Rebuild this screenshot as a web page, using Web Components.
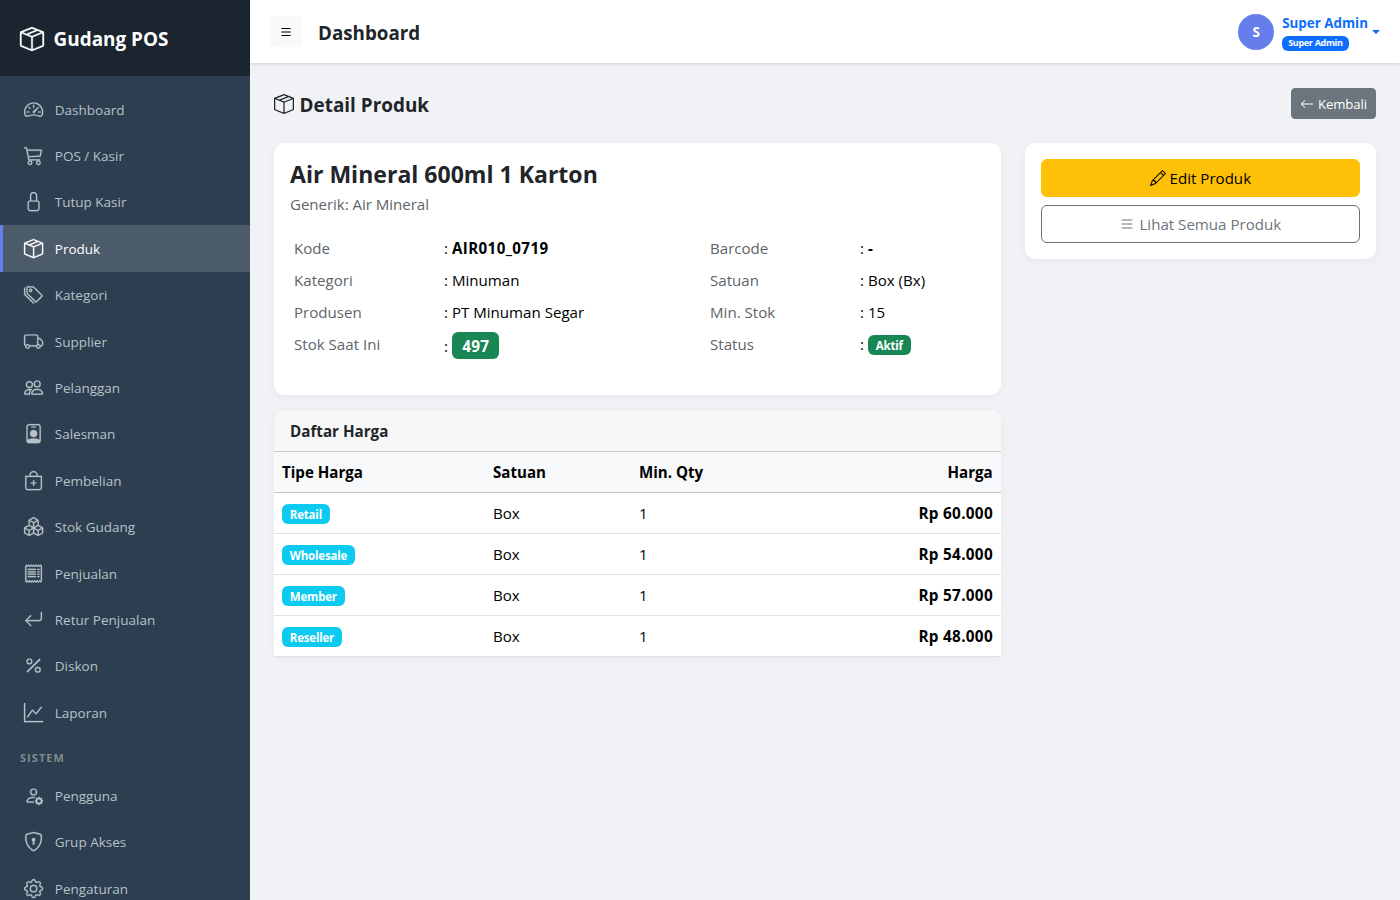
<!DOCTYPE html>
<html lang="id">
<head>
<meta charset="utf-8">
<title>Detail Produk - Gudang POS</title>
<style>
  :root {
    --primary: #0d6efd;
    --accent: #667eea;
    --gray: #6c757d;
    --success: #198754;
    --info: #0dcaf0;
    --warning: #ffc107;
    --dark: #212529;
    --line: #dee2e6;
  }
  body {
    margin: 0;
    height: 900px;
    overflow: hidden;
    background: #f0f2f5;
    color: var(--dark);
    font: 15.1px/24px "Segoe UI", "Open Sans", "Noto Sans", sans-serif;
  }
</style>
</head>
<body>
<pos-app></pos-app>

<script>
const icons = {
  box: 'M8.186 1.113a.5.5 0 0 0-.372 0L1.846 3.5l2.404.961L10.404 2zm3.564 1.426L5.596 5 8 5.961 14.154 3.5zm3.25 1.7-6.5 2.6v7.922l6.5-2.6V4.24zM7.5 14.762V6.838L1 4.239v7.923zM7.443.184a1.5 1.5 0 0 1 1.114 0l7.129 2.852A.5.5 0 0 1 16 3.5v8.662a1 1 0 0 1-.629.928l-7.185 2.874a.5.5 0 0 1-.372 0L.63 13.09a1 1 0 0 1-.63-.928V3.5a.5.5 0 0 1 .314-.464z',
  speedometer: 'M8 4a.5.5 0 0 1 .5.5V6a.5.5 0 0 1-1 0V4.5A.5.5 0 0 1 8 4M3.732 5.732a.5.5 0 0 1 .707 0l.915.914a.5.5 0 1 1-.708.708l-.914-.915a.5.5 0 0 1 0-.707M2 10a.5.5 0 0 1 .5-.5h1.586a.5.5 0 0 1 0 1H2.5A.5.5 0 0 1 2 10m9.5 0a.5.5 0 0 1 .5-.5h1.5a.5.5 0 0 1 0 1H12a.5.5 0 0 1-.5-.5m.754-4.246a.39.39 0 0 0-.527-.02L7.547 9.31a.91.91 0 1 0 1.302 1.258l3.434-4.297a.39.39 0 0 0-.029-.518zM0 10a8 8 0 1 1 15.547 2.661c-.442 1.253-1.845 1.602-2.932 1.25C11.309 13.488 9.475 13 8 13c-1.474 0-3.31.488-4.615.911-1.087.352-2.49.003-2.932-1.25A8 8 0 0 1 0 10m8-7a7 7 0 0 0-6.603 9.329c.203.575.923.876 1.68.63C4.397 12.533 6.358 12 8 12s3.604.532 4.923.96c.757.245 1.477-.056 1.68-.631A7 7 0 0 0 8 3',
  cart: 'M0 1.5A.5.5 0 0 1 .5 1H2a.5.5 0 0 1 .485.379L2.89 3H14.5a.5.5 0 0 1 .49.598l-1 5a.5.5 0 0 1-.465.401l-9.397.472L4.415 11H13a.5.5 0 0 1 0 1H4a.5.5 0 0 1-.491-.408L2.01 3.607 1.61 2H.5a.5.5 0 0 1-.5-.5M3.102 4l.84 4.479 9.144-.459L13.89 4zM5 12a2 2 0 1 0 0 4 2 2 0 0 0 0-4m7 0a2 2 0 1 0 0 4 2 2 0 0 0 0-4m-7 1a1 1 0 1 1 0 2 1 1 0 0 1 0-2m7 0a1 1 0 1 1 0 2 1 1 0 0 1 0-2',
  lock: 'M8 1a2 2 0 0 1 2 2v4H6V3a2 2 0 0 1 2-2m3 6V3a3 3 0 0 0-6 0v4a2 2 0 0 0-2 2v5a2 2 0 0 0 2 2h6a2 2 0 0 0 2-2V9a2 2 0 0 0-2-2M5 8h6a1 1 0 0 1 1 1v5a1 1 0 0 1-1 1H5a1 1 0 0 1-1-1V9a1 1 0 0 1 1-1',
  tags: 'M3 2v4.586l7 7L14.586 9l-7-7zM2 2a1 1 0 0 1 1-1h4.586a1 1 0 0 1 .707.293l7 7a1 1 0 0 1 0 1.414l-4.586 4.586a1 1 0 0 1-1.414 0l-7-7A1 1 0 0 1 2 6.586zM5.5 5a.5.5 0 1 1 0-1 .5.5 0 0 1 0 1m0 1a1.5 1.5 0 1 0 0-3 1.5 1.5 0 0 0 0 3M1 7.086a1 1 0 0 0 .293.707L8.75 15.25l-.043.043a1 1 0 0 1-1.414 0l-7-7A1 1 0 0 1 0 7.586V3a1 1 0 0 1 1-1z',
  truck: 'M0 3.5A1.5 1.5 0 0 1 1.5 2h9A1.5 1.5 0 0 1 12 3.5V5h1.02a1.5 1.5 0 0 1 1.17.563l1.481 1.85a1.5 1.5 0 0 1 .329.938V10.5a1.5 1.5 0 0 1-1.5 1.5H14a2 2 0 1 1-4 0H5a2 2 0 1 1-3.998-.085A1.5 1.5 0 0 1 0 10.5zm1.294 7.456A2 2 0 0 1 4.732 11h5.536a2 2 0 0 1 .732-.732V3.5a.5.5 0 0 0-.5-.5h-9a.5.5 0 0 0-.5.5v7a.5.5 0 0 0 .294.456M12 10a2 2 0 0 1 1.732 1h.768a.5.5 0 0 0 .5-.5V8.35a.5.5 0 0 0-.11-.312l-1.48-1.85A.5.5 0 0 0 13.02 6H12zm-9 1a1 1 0 1 0 0 2 1 1 0 0 0 0-2m9 0a1 1 0 1 0 0 2 1 1 0 0 0 0-2',
  people: 'M15 14s1 0 1-1-1-4-5-4-5 3-5 4 1 1 1 1zm-7.978-1L7 12.996c.001-.264.167-1.03.76-1.72C8.312 10.629 9.282 10 11 10c1.717 0 2.687.63 3.24 1.276.593.69.758 1.457.76 1.72l-.008.002-.014.002zM11 7a2 2 0 1 0 0-4 2 2 0 0 0 0 4m3-2a3 3 0 1 1-6 0 3 3 0 0 1 6 0M6.936 9.28a6 6 0 0 0-1.23-.247A7 7 0 0 0 5 9c-4 0-5 3-5 4q0 1 1 1h4.216A2.24 2.24 0 0 1 5 13c0-1.01.377-2.042 1.09-2.904.243-.294.526-.569.846-.816M4.92 10A5.5 5.5 0 0 0 4 13H1c0-.26.164-1.03.76-1.724.545-.636 1.492-1.256 3.16-1.275ZM1.5 5.5a3 3 0 1 1 6 0 3 3 0 0 1-6 0m3-2a2 2 0 1 0 0 4 2 2 0 0 0 0-4',
  badge: 'M6.5 2a.5.5 0 0 0 0 1h3a.5.5 0 0 0 0-1zM11 8a3 3 0 1 1-6 0 3 3 0 0 1 6 0M4.5 0A2.5 2.5 0 0 0 2 2.5V14a2 2 0 0 0 2 2h8a2 2 0 0 0 2-2V2.5A2.5 2.5 0 0 0 11.5 0zM3 2.5A1.5 1.5 0 0 1 4.5 1h7A1.5 1.5 0 0 1 13 2.5v10.795a4.2 4.2 0 0 0-.776-.492C11.392 12.387 10.063 12 8 12s-3.392.387-4.224.803a4.2 4.2 0 0 0-.776.492z',
  bag: 'M8 7.5a.5.5 0 0 1 .5.5v1.5H10a.5.5 0 0 1 0 1H8.5V12a.5.5 0 0 1-1 0v-1.5H6a.5.5 0 0 1 0-1h1.5V8a.5.5 0 0 1 .5-.5M8 1a2.5 2.5 0 0 1 2.5 2.5V4h-5v-.5A2.5 2.5 0 0 1 8 1m3.5 3v-.5a3.5 3.5 0 1 0-7 0V4H1v10a2 2 0 0 0 2 2h10a2 2 0 0 0 2-2V4zM2 5h12v9a1 1 0 0 1-1 1H3a1 1 0 0 1-1-1z',
  boxes: 'M7.752.066a.5.5 0 0 1 .496 0l3.75 2.143a.5.5 0 0 1 .252.434v3.995l3.498 2A.5.5 0 0 1 16 9.07v4.286a.5.5 0 0 1-.252.434l-3.75 2.143a.5.5 0 0 1-.496 0l-3.502-2-3.502 2.001a.5.5 0 0 1-.496 0l-3.75-2.143A.5.5 0 0 1 0 13.357V9.071a.5.5 0 0 1 .252-.434L3.75 6.638V2.643a.5.5 0 0 1 .252-.434zM4.25 7.504 1.508 9.071l2.742 1.567 2.742-1.567zM7.5 9.933l-2.75 1.571v3.134l2.75-1.571zm1 3.134 2.75 1.571v-3.134L8.5 9.933zm.508-3.996 2.742 1.567 2.742-1.567-2.742-1.567zm2.242-2.433V3.504L8.5 5.076V8.21zM7.5 8.21V5.076L4.75 3.504v3.134zM5.258 2.643 8 4.21l2.742-1.567L8 1.076zM15 9.933l-2.75 1.571v3.134L15 13.067zM3.75 14.638v-3.134L1 9.933v3.134z',
  receipt: 'M1.92.506a.5.5 0 0 1 .434.14L3 1.293l.646-.647a.5.5 0 0 1 .708 0L5 1.293l.646-.647a.5.5 0 0 1 .708 0L7 1.293l.646-.647a.5.5 0 0 1 .708 0L9 1.293l.646-.647a.5.5 0 0 1 .708 0l.646.647.646-.647a.5.5 0 0 1 .708 0l.646.647.646-.647a.5.5 0 0 1 .801.13l.5 1A.5.5 0 0 1 15 2v12a.5.5 0 0 1-.053.224l-.5 1a.5.5 0 0 1-.8.13L13 14.707l-.646.647a.5.5 0 0 1-.708 0L11 14.707l-.646.647a.5.5 0 0 1-.708 0L9 14.707l-.646.647a.5.5 0 0 1-.708 0L7 14.707l-.646.647a.5.5 0 0 1-.708 0L5 14.707l-.646.647a.5.5 0 0 1-.708 0L3 14.707l-.646.647a.5.5 0 0 1-.801-.13l-.5-1A.5.5 0 0 1 1 14V2a.5.5 0 0 1 .053-.224l.5-1a.5.5 0 0 1 .367-.27m.217 1.338L2 2.118v11.764l.137.274.51-.51a.5.5 0 0 1 .707 0l.646.647.646-.646a.5.5 0 0 1 .708 0l.646.646.646-.646a.5.5 0 0 1 .708 0l.646.646.646-.646a.5.5 0 0 1 .708 0l.646.646.646-.646a.5.5 0 0 1 .708 0l.646.646.646-.646a.5.5 0 0 1 .708 0l.509.509.137-.274V2.118l-.137-.274-.51.51a.5.5 0 0 1-.707 0L12 1.707l-.646.647a.5.5 0 0 1-.708 0L10 1.707l-.646.647a.5.5 0 0 1-.708 0L8 1.707l-.646.647a.5.5 0 0 1-.708 0L6 1.707l-.646.647a.5.5 0 0 1-.708 0L4 1.707l-.646.647a.5.5 0 0 1-.708 0zM3 4.5a.5.5 0 0 1 .5-.5h6a.5.5 0 1 1 0 1h-6a.5.5 0 0 1-.5-.5m0 2a.5.5 0 0 1 .5-.5h6a.5.5 0 1 1 0 1h-6a.5.5 0 0 1-.5-.5m0 2a.5.5 0 0 1 .5-.5h6a.5.5 0 1 1 0 1h-6a.5.5 0 0 1-.5-.5m0 2a.5.5 0 0 1 .5-.5h6a.5.5 0 0 1 0 1h-6a.5.5 0 0 1-.5-.5m8-6a.5.5 0 0 1 .5-.5h1a.5.5 0 0 1 0 1h-1a.5.5 0 0 1-.5-.5m0 2a.5.5 0 0 1 .5-.5h1a.5.5 0 0 1 0 1h-1a.5.5 0 0 1-.5-.5m0 2a.5.5 0 0 1 .5-.5h1a.5.5 0 0 1 0 1h-1a.5.5 0 0 1-.5-.5m0 2a.5.5 0 0 1 .5-.5h1a.5.5 0 0 1 0 1h-1a.5.5 0 0 1-.5-.5',
  return: 'M14.5 1.5a.5.5 0 0 1 .5.5v4.8a2.5 2.5 0 0 1-2.5 2.5H2.707l3.347 3.346a.5.5 0 0 1-.708.708l-4.2-4.2a.5.5 0 0 1 0-.708l4-4a.5.5 0 1 1 .708.708L2.707 8.3H12.5A1.5 1.5 0 0 0 14 6.8V2a.5.5 0 0 1 .5-.5',
  percent: 'M13.442 2.558a.625.625 0 0 1 0 .884l-10 10a.625.625 0 1 1-.884-.884l10-10a.625.625 0 0 1 .884 0M4.5 6a1.5 1.5 0 1 1 0-3 1.5 1.5 0 0 1 0 3m0 1a2.5 2.5 0 1 0 0-5 2.5 2.5 0 0 0 0 5m7 6a1.5 1.5 0 1 1 0-3 1.5 1.5 0 0 1 0 3m0 1a2.5 2.5 0 1 0 0-5 2.5 2.5 0 0 0 0 5',
  graph: 'M0 0h1v15h15v1H0zm14.817 3.113a.5.5 0 0 1 .07.704l-4.5 5.5a.5.5 0 0 1-.74.037L7.06 6.767l-3.656 5.027a.5.5 0 0 1-.808-.588l4-5.5a.5.5 0 0 1 .758-.06l2.609 2.61 4.15-5.073a.5.5 0 0 1 .704-.07',
  user: 'M11 5a3 3 0 1 1-6 0 3 3 0 0 1 6 0M8 7a2 2 0 1 0 0-4 2 2 0 0 0 0 4m.256 7a4.5 4.5 0 0 1-.229-1.004H3c.001-.246.154-.986.832-1.664C4.484 10.68 5.711 10 8 10q.39 0 .74.025c.226-.341.496-.65.804-.918Q8.844 9.002 8 9c-5 0-6 3-6 4s1 1 1 1zm3.63-4.54c.18-.613 1.048-.613 1.229 0l.043.148a.64.64 0 0 0 .921.382l.136-.074c.561-.306 1.175.308.87.869l-.075.136a.64.64 0 0 0 .382.92l.149.045c.612.18.612 1.048 0 1.229l-.15.043a.64.64 0 0 0-.38.921l.074.136c.305.561-.309 1.175-.87.87l-.136-.075a.64.64 0 0 0-.92.382l-.045.149c-.18.612-1.048.612-1.229 0l-.043-.15a.64.64 0 0 0-.921-.38l-.136.074c-.561.305-1.175-.309-.87-.87l.075-.136a.64.64 0 0 0-.382-.92l-.148-.045c-.613-.18-.613-1.048 0-1.229l.148-.043a.64.64 0 0 0 .382-.921l-.074-.136c-.306-.561.308-1.175.869-.87l.136.075a.64.64 0 0 0 .92-.382zM14 12.5a1.5 1.5 0 1 0-3 0 1.5 1.5 0 0 0 3 0',
  shield: 'M5.338 1.59a61 61 0 0 0-2.837.856.48.48 0 0 0-.328.39c-.554 4.157.726 7.19 2.253 9.188a10.7 10.7 0 0 0 2.287 2.233c.346.244.652.42.893.533q.18.085.293.118a1 1 0 0 0 .101.025 1 1 0 0 0 .1-.025q.114-.034.294-.118c.24-.113.547-.29.893-.533a10.7 10.7 0 0 0 2.287-2.233c1.527-1.997 2.807-5.031 2.253-9.188a.48.48 0 0 0-.328-.39c-.651-.213-1.75-.56-2.837-.855C9.552 1.29 8.531 1.067 8 1.067c-.53 0-1.552.223-2.662.524zM5.072.56C6.157.265 7.31 0 8 0s1.843.265 2.928.56c1.11.3 2.229.655 2.887.87a1.54 1.54 0 0 1 1.044 1.262c.596 4.477-.787 7.795-2.465 9.99a11.8 11.8 0 0 1-2.517 2.453 7 7 0 0 1-1.048.625c-.28.132-.581.24-.829.24s-.548-.108-.829-.24a7 7 0 0 1-1.048-.625 11.8 11.8 0 0 1-2.517-2.453C1.928 10.487.545 7.169 1.141 2.692A1.54 1.54 0 0 1 2.185 1.43 63 63 0 0 1 5.072.56M9.5 6.5a1.5 1.5 0 0 1-1 1.415l.385 1.99a.5.5 0 0 1-.491.595h-.788a.5.5 0 0 1-.49-.595l.384-1.99a1.5 1.5 0 1 1 2-1.415',
  gear: 'M8 4.754a3.246 3.246 0 1 0 0 6.492 3.246 3.246 0 0 0 0-6.492M5.754 8a2.246 2.246 0 1 1 4.492 0 2.246 2.246 0 0 1-4.492 0M9.796 1.343c-.527-1.79-3.065-1.79-3.592 0l-.094.319a.873.873 0 0 1-1.255.52l-.292-.16c-1.64-.892-3.433.902-2.54 2.541l.159.292a.873.873 0 0 1-.52 1.255l-.319.094c-1.79.527-1.79 3.065 0 3.592l.319.094a.873.873 0 0 1 .52 1.255l-.16.292c-.892 1.64.901 3.434 2.541 2.54l.292-.159a.873.873 0 0 1 1.255.52l.094.319c.527 1.79 3.065 1.79 3.592 0l.094-.319a.873.873 0 0 1 1.255-.52l.292.16c1.64.893 3.434-.902 2.54-2.541l-.159-.292a.873.873 0 0 1 .52-1.255l.319-.094c1.79-.527 1.79-3.065 0-3.592l-.319-.094a.873.873 0 0 1-.52-1.255l.16-.292c.893-1.64-.902-3.433-2.541-2.54l-.292.159a.873.873 0 0 1-1.255-.52zm-2.633.283c.246-.835 1.428-.835 1.674 0l.094.319a1.873 1.873 0 0 0 2.693 1.115l.291-.16c.764-.415 1.6.42 1.184 1.185l-.159.292a1.873 1.873 0 0 0 1.116 2.692l.318.094c.835.246.835 1.428 0 1.674l-.319.094a1.873 1.873 0 0 0-1.115 2.693l.16.291c.415.764-.42 1.6-1.185 1.184l-.291-.159a1.873 1.873 0 0 0-2.693 1.116l-.094.318c-.246.835-1.428.835-1.674 0l-.094-.319a1.873 1.873 0 0 0-2.692-1.115l-.292.16c-.764.415-1.6-.42-1.184-1.185l.159-.291A1.873 1.873 0 0 0 1.945 8.93l-.319-.094c-.835-.246-.835-1.428 0-1.674l.319-.094A1.873 1.873 0 0 0 3.06 4.377l-.16-.292c-.415-.764.42-1.6 1.185-1.184l.292.159a1.873 1.873 0 0 0 2.692-1.115z',
  pencil: 'M12.146.146a.5.5 0 0 1 .708 0l3 3a.5.5 0 0 1 0 .708l-10 10a.5.5 0 0 1-.168.11l-5 2a.5.5 0 0 1-.65-.65l2-5a.5.5 0 0 1 .11-.168zM11.207 2.5 13.5 4.793 14.793 3.5 12.5 1.207zm1.586 3L10.5 3.207 4 9.707V10h.5a.5.5 0 0 1 .5.5v.5h.5a.5.5 0 0 1 .5.5v.5h.293zm-9.761 5.175-.106.106-1.528 3.821 3.821-1.528.106-.106A.5.5 0 0 1 5 12.5V12h-.5a.5.5 0 0 1-.5-.5V11h-.5a.5.5 0 0 1-.468-.325',
  list: 'M2.5 12a.5.5 0 0 1 .5-.5h10a.5.5 0 0 1 0 1H3a.5.5 0 0 1-.5-.5m0-4a.5.5 0 0 1 .5-.5h10a.5.5 0 0 1 0 1H3a.5.5 0 0 1-.5-.5m0-4a.5.5 0 0 1 .5-.5h10a.5.5 0 0 1 0 1H3a.5.5 0 0 1-.5-.5',
  back: 'M15 8a.5.5 0 0 0-.5-.5H2.707l3.147-3.146a.5.5 0 1 0-.708-.708l-4 4a.5.5 0 0 0 0 .708l4 4a.5.5 0 0 0 .708-.708L2.707 8.5H14.5A.5.5 0 0 0 15 8',
};

class PosElement extends HTMLElement {
  constructor() {
    super();
    this.attachShadow({ mode: 'open' });
  }

  connectedCallback() {
    this.shadowRoot.innerHTML = `<style>${this.constructor.styles}</style>${this.html()}`;
  }
}

class PosIcon extends PosElement {
  static styles = /* css */`
    :host { display: inline-flex; flex: none; width: 1em; height: 1em; }
    svg {
      width: 100%;
      height: 100%;
      overflow: visible;
      fill: currentColor;
      stroke: currentColor;
      stroke-width: var(--icon-stroke, 0);
    }
  `;

  html() {
    const rule = this.getAttribute('name') === 'speedometer' ? 'evenodd' : 'nonzero';
    return `<svg viewBox="0 0 16 16"><path fill-rule="${rule}" d="${icons[this.getAttribute('name')]}"/></svg>`;
  }
}

class PosBadge extends PosElement {
  static styles = /* css */`
    :host {
      display: inline-flex;
      align-items: center;
      justify-content: center;
      box-sizing: border-box;
      height: 20px;
      padding: 1px 7.8px 0;
      border-radius: 6px;
      background: var(--success);
      color: #fff;
      font-size: 11.5px;
      font-weight: 700;
      line-height: 1;
      letter-spacing: -.2px;
      white-space: nowrap;
    }
    :host([tone=info]) { background: var(--info); }
    :host([tone=primary]) {
      height: 15px;
      padding: 0 6px;
      background: var(--primary);
      font-size: 9.1px;
      letter-spacing: -.35px;
    }
    :host([size=lg]) { height: 27px; padding: 1px 10.4px 0; font-size: 15.4px; letter-spacing: .1px; }
  `;

  html() {
    return '<slot></slot>';
  }
}

class PosButton extends PosElement {
  static styles = /* css */`
    :host {
      display: flex;
      align-items: center;
      justify-content: center;
      gap: 4px;
      box-sizing: border-box;
      height: 38px;
      border: 1px solid var(--gray);
      border-radius: 6px;
      color: var(--gray);
      cursor: pointer;
    }
    pos-icon { font-size: 16px; }
    :host([kind=warning]) { background: var(--warning); border-color: var(--warning); color: #000; }
    :host([kind=back]) {
      height: 31px;
      padding: 0 8px;
      border-radius: 4px;
      background: var(--gray);
      color: #fff;
      font-size: 13.2px;
      letter-spacing: -.1px;
    }
    :host([kind=back]) pos-icon { font-size: 14px; }
    :host([kind=toggle]) {
      width: 32px;
      height: 31px;
      border-color: #f8f9fa;
      border-radius: 4px;
      background: #f8f9fa;
      color: #000;
    }
    :host([kind=toggle]) pos-icon { font-size: 14px; }
  `;

  html() {
    return `<pos-icon name="${this.getAttribute('icon')}"></pos-icon><slot></slot>`;
  }
}

class PosCard extends PosElement {
  static styles = /* css */`
    :host {
      display: block;
      border-radius: 10px;
      background: #fff;
      box-shadow: 0 2px 10px rgba(0, 0, 0, .05);
    }
    .body { padding: 16px; }
    :host([heading]) .body { padding: 0; }
    header {
      padding: 8px 16px;
      border-bottom: 1px solid #cacaca;
      border-radius: 10px 10px 0 0;
      background: #f7f7f7;
      font-size: 15.2px;
      font-weight: 700;
    }
  `;

  html() {
    const heading = this.getAttribute('heading');
    return `${heading ? `<header>${heading}</header>` : ''}<div class="body"><slot></slot></div>`;
  }
}

class NavItem extends PosElement {
  static styles = /* css */`
    :host {
      display: flex;
      align-items: center;
      gap: 11.8px;
      box-sizing: border-box;
      height: 46.4px;
      padding-left: 20.8px;
      border-left: 3px solid transparent;
      color: #b8c1c8;
      font-size: 13.5px;
      cursor: pointer;
      --icon-stroke: .2;
    }
    :host([active]) { border-color: var(--accent); background: #4c5b69; color: #fff; }
    pos-icon { font-size: 19.2px; }
    span { padding-top: .8px; }
  `;

  html() {
    return `<pos-icon name="${this.getAttribute('icon')}"></pos-icon><span><slot></slot></span>`;
  }
}

class SideBar extends PosElement {
  static styles = /* css */`
    :host { display: block; flex: 0 0 250px; height: 900px; overflow: hidden; background: #2c3e50; }
    .brand {
      display: flex;
      align-items: center;
      gap: 9.6px;
      box-sizing: border-box;
      height: 76px;
      padding: 2px 0 0 20px;
      background: #1a252f;
      color: #fff;
      font-size: 18.9px;
      font-weight: 700;
      --icon-stroke: .2;
    }
    .brand pos-icon { font-size: 24px; }
    nav { padding-top: 10px; }
    .section {
      box-sizing: border-box;
      height: 36.9px;
      padding: 10.6px 20px 0;
      color: #7f8c8d;
      font-size: 10.9px;
      font-weight: 700;
      letter-spacing: 1.1px;
    }
  `;

  items = [
    ['speedometer', 'Dashboard'],
    ['cart', 'POS / Kasir'],
    ['lock', 'Tutup Kasir'],
    ['box', 'Produk'],
    ['tags', 'Kategori'],
    ['truck', 'Supplier'],
    ['people', 'Pelanggan'],
    ['badge', 'Salesman'],
    ['bag', 'Pembelian'],
    ['boxes', 'Stok Gudang'],
    ['receipt', 'Penjualan'],
    ['return', 'Retur Penjualan'],
    ['percent', 'Diskon'],
    ['graph', 'Laporan'],
  ];

  system = [
    ['user', 'Pengguna'],
    ['shield', 'Grup Akses'],
    ['gear', 'Pengaturan'],
  ];

  item([icon, label]) {
    return `<nav-item icon="${icon}" ${label === 'Produk' ? 'active' : ''}>${label}</nav-item>`;
  }

  html() {
    return /* html */`
      <div class="brand"><pos-icon name="box"></pos-icon><span>Gudang POS</span></div>
      <nav>
        ${this.items.map(this.item).join('')}
        <div class="section">SISTEM</div>
        ${this.system.map(this.item).join('')}
      </nav>
    `;
  }
}

class TopBar extends PosElement {
  static styles = /* css */`
    :host {
      display: flex;
      align-items: center;
      box-sizing: border-box;
      height: 63px;
      padding: 0 20px;
      background: #fff;
      box-shadow: 0 1px 3px rgba(0, 0, 0, .15);
    }
    h1 { flex: 1; margin: 2px 0 0 16px; font-size: 18.8px; line-height: 24px; }
    .avatar {
      display: grid;
      place-items: center;
      width: 36px;
      height: 36px;
      border-radius: 50%;
      background: var(--accent);
      color: #fff;
      font-size: 13.4px;
      font-weight: 700;
    }
    .user { display: flex; align-items: center; gap: 8px; color: var(--primary); }
    .name { display: flex; flex-direction: column; align-items: flex-start; }
    .name b { font-size: 13.4px; line-height: 20px; margin-bottom: 3px; }
    .caret {
      margin-left: -4px;
      border: 4.2px solid transparent;
      border-top-color: currentColor;
      border-bottom: 0;
    }
  `;

  html() {
    return /* html */`
      <pos-button kind="toggle" icon="list"></pos-button>
      <h1>Dashboard</h1>
      <div class="user">
        <div class="avatar">S</div>
        <div class="name"><b>Super Admin</b><pos-badge tone="primary">Super Admin</pos-badge></div>
        <span class="caret"></span>
      </div>
    `;
  }
}

class ProductInfo extends PosElement {
  static styles = /* css */`
    :host { display: block; }
    h2 { margin: 0 0 3px; padding-top: 1px; font-size: 23.05px; line-height: 28.8px; }
    p { margin: 0 0 16px; color: #5f6469; letter-spacing: -.05px; }
    dl {
      display: grid;
      grid-template-columns: 150px 266px 150px 1fr;
      grid-template-rows: 32px 32px 32px 35.2px;
      margin: 0 0 16px;
    }
    dt, dd { margin: 0; padding: 4px; }
    dt { color: #5f6469; }
    dd { color: #000; }
    dd b { letter-spacing: .42px; }
    .badge { display: flex; gap: 4px; align-items: center; height: 24px; }
    .badge :not([size]) { margin-top: 2px; }
    .tall { height: 28px; }
  `;

  html() {
    return /* html */`
      <h2>Air Mineral 600ml 1 Karton</h2>
      <p>Generik: Air Mineral</p>
      <dl>
        <dt>Kode</dt><dd>: <b>AIR010_0719</b></dd>
        <dt>Barcode</dt><dd>: <b>-</b></dd>
        <dt>Kategori</dt><dd>: Minuman</dd>
        <dt>Satuan</dt><dd>: Box (Bx)</dd>
        <dt>Produsen</dt><dd>: PT Minuman Segar</dd>
        <dt>Min. Stok</dt><dd>: 15</dd>
        <dt>Stok Saat Ini</dt><dd class="badge tall">: <pos-badge size="lg">497</pos-badge></dd>
        <dt>Status</dt><dd class="badge">: <pos-badge>Aktif</pos-badge></dd>
      </dl>
    `;
  }
}

class PriceTable extends PosElement {
  static styles = /* css */`
    :host { display: block; color: #000; }
    .row {
      display: grid;
      grid-template-columns: 211px 146px 1fr 1fr;
      border-bottom: 1px solid var(--line);
      background: #fff;
    }
    .row > * { padding: 8px; height: 24px; }
    .row > :last-child { text-align: right; font-weight: 700; }
    .row > :first-child { display: flex; align-items: center; }
    .row:not(.head) > :first-child { padding: 11px 8px 8px; height: 21px; }
    .row:not(.head) > :last-child { font-size: 15.3px; letter-spacing: .3px; margin-right: -.3px; }
    .head { border-color: #c6c7c8; background: #f8f9fa; font-weight: 700; }
  `;

  rows = [
    ['Retail', 'Box', 1, 'Rp 60.000'],
    ['Wholesale', 'Box', 1, 'Rp 54.000'],
    ['Member', 'Box', 1, 'Rp 57.000'],
    ['Reseller', 'Box', 1, 'Rp 48.000'],
  ];

  html() {
    return /* html */`
      <div class="row head">
        <div>Tipe Harga</div><div>Satuan</div><div>Min. Qty</div><div>Harga</div>
      </div>
      ${this.rows.map(([type, unit, qty, price]) => `
        <div class="row">
          <div><pos-badge tone="info">${type}</pos-badge></div>
          <div>${unit}</div><div>${qty}</div><div>${price}</div>
        </div>`).join('')}
    `;
  }
}

class PosApp extends PosElement {
  static styles = /* css */`
    :host { display: flex; height: 900px; }
    .page { flex: 1; min-width: 0; }
    main { padding: 25px 24px 24px; }
    .title {
      display: flex;
      justify-content: space-between;
      align-items: center;
      height: 31px;
      margin-bottom: 24px;
    }
    h1 { display: flex; align-items: center; gap: 5.6px; margin: 0; font-size: 18.9px; }
    h1 pos-icon { font-size: 20px; }
    h1 span { padding-top: 2px; }
    .columns { display: flex; gap: 24px; align-items: flex-start; }
    .left { flex: 0 0 calc((100% + 24px) * 2 / 3 - 24px); display: grid; gap: 16px; }
    .right { flex: 1; }
    .actions { display: grid; gap: 8px; }
  `;

  html() {
    return /* html */`
      <side-bar></side-bar>
      <div class="page">
        <top-bar></top-bar>
        <main>
          <div class="title">
            <h1><pos-icon name="box"></pos-icon><span>Detail Produk</span></h1>
            <pos-button kind="back" icon="back">Kembali</pos-button>
          </div>
          <div class="columns">
            <div class="left">
              <pos-card><product-info></product-info></pos-card>
              <pos-card heading="Daftar Harga"><price-table></price-table></pos-card>
            </div>
            <pos-card class="right">
              <div class="actions">
                <pos-button kind="warning" icon="pencil">Edit Produk</pos-button>
                <pos-button icon="list">Lihat Semua Produk</pos-button>
              </div>
            </pos-card>
          </div>
        </main>
      </div>
    `;
  }
}

customElements.define('pos-icon', PosIcon);
customElements.define('pos-badge', PosBadge);
customElements.define('pos-button', PosButton);
customElements.define('pos-card', PosCard);
customElements.define('nav-item', NavItem);
customElements.define('side-bar', SideBar);
customElements.define('top-bar', TopBar);
customElements.define('product-info', ProductInfo);
customElements.define('price-table', PriceTable);
customElements.define('pos-app', PosApp);
</script>
</body>
</html>
